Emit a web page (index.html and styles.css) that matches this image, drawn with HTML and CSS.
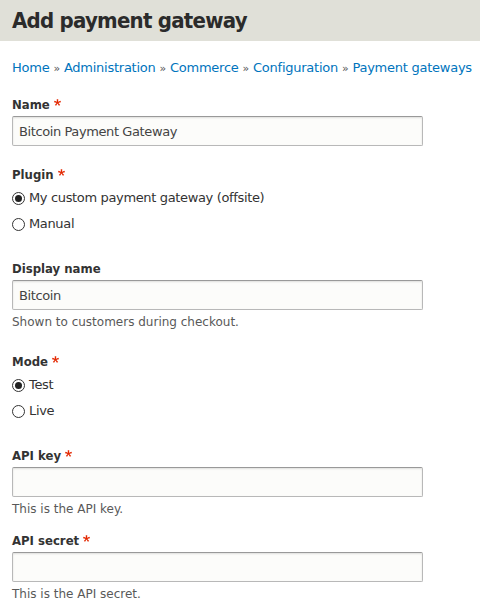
FILE: index.html
```html
<!DOCTYPE html>
<html lang="en">
<head>
<meta charset="utf-8">
<title>Add payment gateway</title>
<link rel="stylesheet" href="styles.css">
</head>
<body>
<header class="page-header">
  <h1 class="page-title">Add payment gateway</h1>
</header>
<main class="content">
  <nav class="breadcrumb">
    <a href="#">Home</a><span class="sep">»</span><a href="#">Administration</a><span class="sep">»</span><a href="#">Commerce</a><span class="sep">»</span><a href="#">Configuration</a><span class="sep">»</span><a href="#">Payment gateways</a>
  </nav>
  <form class="form">
    <div class="form-item">
      <label class="label">Name<svg class="req" viewBox="0 0 16 16" aria-hidden="true"><path d="M0,7.562l1.114-3.438c2.565,0.906,4.43,1.688,5.59,2.35C6.398,3.553,6.237,1.544,6.223,0.447h3.511c-0.05,1.597-0.234,3.6-0.558,6.003c1.664-0.838,3.566-1.613,5.714-2.325L16,7.562c-2.05,0.678-4.06,1.131-6.028,1.356c0.984,0.856,2.372,2.381,4.166,4.575l-2.906,2.059c-0.935-1.274-2.041-3.009-3.316-5.206c-1.194,2.275-2.244,4.013-3.147,5.206l-2.856-2.059c1.872-2.307,3.211-3.832,4.017-4.575C3.849,8.516,1.872,8.062,0,7.562"/></svg></label>
      <input class="text" type="text" value="Bitcoin Payment Gateway">
    </div>
    <div class="form-item form-item--radios">
      <div class="label">Plugin<svg class="req" viewBox="0 0 16 16" aria-hidden="true"><path d="M0,7.562l1.114-3.438c2.565,0.906,4.43,1.688,5.59,2.35C6.398,3.553,6.237,1.544,6.223,0.447h3.511c-0.05,1.597-0.234,3.6-0.558,6.003c1.664-0.838,3.566-1.613,5.714-2.325L16,7.562c-2.05,0.678-4.06,1.131-6.028,1.356c0.984,0.856,2.372,2.381,4.166,4.575l-2.906,2.059c-0.935-1.274-2.041-3.009-3.316-5.206c-1.194,2.275-2.244,4.013-3.147,5.206l-2.856-2.059c1.872-2.307,3.211-3.832,4.017-4.575C3.849,8.516,1.872,8.062,0,7.562"/></svg></div>
      <label class="option"><span class="radio checked"></span>My custom payment gateway (offsite)</label>
      <label class="option"><span class="radio"></span>Manual</label>
    </div>
    <div class="form-item">
      <label class="label">Display name</label>
      <input class="text" type="text" value="Bitcoin">
      <div class="description">Shown to customers during checkout.</div>
    </div>
    <div class="form-item form-item--radios form-item--spaced">
      <div class="label">Mode<svg class="req" viewBox="0 0 16 16" aria-hidden="true"><path d="M0,7.562l1.114-3.438c2.565,0.906,4.43,1.688,5.59,2.35C6.398,3.553,6.237,1.544,6.223,0.447h3.511c-0.05,1.597-0.234,3.6-0.558,6.003c1.664-0.838,3.566-1.613,5.714-2.325L16,7.562c-2.05,0.678-4.06,1.131-6.028,1.356c0.984,0.856,2.372,2.381,4.166,4.575l-2.906,2.059c-0.935-1.274-2.041-3.009-3.316-5.206c-1.194,2.275-2.244,4.013-3.147,5.206l-2.856-2.059c1.872-2.307,3.211-3.832,4.017-4.575C3.849,8.516,1.872,8.062,0,7.562"/></svg></div>
      <label class="option"><span class="radio checked"></span>Test</label>
      <label class="option"><span class="radio"></span>Live</label>
    </div>
    <div class="form-item">
      <label class="label">API key<svg class="req" viewBox="0 0 16 16" aria-hidden="true"><path d="M0,7.562l1.114-3.438c2.565,0.906,4.43,1.688,5.59,2.35C6.398,3.553,6.237,1.544,6.223,0.447h3.511c-0.05,1.597-0.234,3.6-0.558,6.003c1.664-0.838,3.566-1.613,5.714-2.325L16,7.562c-2.05,0.678-4.06,1.131-6.028,1.356c0.984,0.856,2.372,2.381,4.166,4.575l-2.906,2.059c-0.935-1.274-2.041-3.009-3.316-5.206c-1.194,2.275-2.244,4.013-3.147,5.206l-2.856-2.059c1.872-2.307,3.211-3.832,4.017-4.575C3.849,8.516,1.872,8.062,0,7.562"/></svg></label>
      <input class="text" type="text" value="">
      <div class="description">This is the API key.</div>
    </div>
    <div class="form-item">
      <label class="label">API secret<svg class="req" viewBox="0 0 16 16" aria-hidden="true"><path d="M0,7.562l1.114-3.438c2.565,0.906,4.43,1.688,5.59,2.35C6.398,3.553,6.237,1.544,6.223,0.447h3.511c-0.05,1.597-0.234,3.6-0.558,6.003c1.664-0.838,3.566-1.613,5.714-2.325L16,7.562c-2.05,0.678-4.06,1.131-6.028,1.356c0.984,0.856,2.372,2.381,4.166,4.575l-2.906,2.059c-0.935-1.274-2.041-3.009-3.316-5.206c-1.194,2.275-2.244,4.013-3.147,5.206l-2.856-2.059c1.872-2.307,3.211-3.832,4.017-4.575C3.849,8.516,1.872,8.062,0,7.562"/></svg></label>
      <input class="text" type="text" value="">
      <div class="description">This is the API secret.</div>
    </div>
  </form>
</main>
</body>
</html>
```
FILE: styles.css
```css
html, body {
  margin: 0;
  padding: 0;
  background: #fff;
}
body {
  font-family: "DejaVu Sans", Verdana, sans-serif;
  font-size: 13px;
  color: #333;
}
.page-header {
  background: #e0e0d8;
  height: 41px;
  padding: 0 12px;
  display: flex;
  align-items: center;
}
.page-title {
  margin: 1px 0 0;
  font-family: "DejaVu Sans Condensed", "DejaVu Sans", sans-serif;
  font-size: 22px;
  font-weight: bold;
  letter-spacing: -0.75px;
  color: #2b2b2b;
  line-height: 1;
}
.content {
  padding: 18px 12px 0;
}
.breadcrumb {
  line-height: 18px;
  white-space: nowrap;
  letter-spacing: -0.25px;
}
.breadcrumb a {
  color: #0074bd;
  text-decoration: none;
}
.breadcrumb .sep {
  color: #555;
  padding: 0 4px;
  font-size: 11px;
}
.form {
  margin-top: 18px;
}
.form-item {
  margin: 0 0 15px;
}
.form-item--radios {
  margin: 20px 0 27px;
}
.form-item--spaced {
  margin-top: 23px;
}
.label {
  display: flex;
  align-items: flex-start;
  font-family: "DejaVu Sans Condensed", "DejaVu Sans", sans-serif;
  font-weight: bold;
  line-height: 18px;
  margin-bottom: 2px;
  color: #333;
}
.form-item--radios .label {
  margin-bottom: 5px;
}
.req {
  width: 7px;
  height: 7px;
  margin: 3px 0 0 4px;
  fill: #e32700;
  flex: none;
}
.text {
  display: block;
  box-sizing: border-box;
  width: 411px;
  height: 30px;
  margin: 0;
  padding: 0 6px;
  font: 13px "DejaVu Sans", Verdana, sans-serif;
  letter-spacing: -0.4px;
  color: #444;
  background: #fcfcfa;
  border: 1px solid #b8b8b8;
  border-top-color: #999;
  border-radius: 2px;
  box-shadow: inset 0 1px 2px rgba(0, 0, 0, 0.12);
  outline: none;
}
.option {
  display: flex;
  align-items: center;
  line-height: 18px;
  margin-bottom: 8px;
  letter-spacing: -0.35px;
}
.option:last-child {
  margin-bottom: 0;
}
.radio {
  box-sizing: border-box;
  width: 13px;
  height: 13px;
  border: 1px solid #333;
  border-radius: 50%;
  margin-right: 4px;
  flex: none;
  display: flex;
  align-items: center;
  justify-content: center;
  background: #fff;
}
.radio.checked::after {
  content: "";
  width: 7px;
  height: 7px;
  border-radius: 50%;
  background: #222;
}
.description {
  margin-top: 4px;
  font-size: 12px;
  line-height: 16px;
  color: #595959;
}
```
